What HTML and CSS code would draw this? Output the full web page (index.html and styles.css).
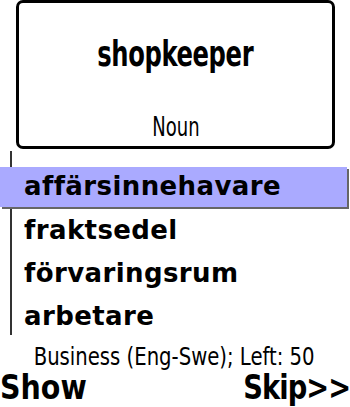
FILE: index.html
```html
<!DOCTYPE html>
<html>
<head>
<meta charset="utf-8">
<link rel="stylesheet" href="styles.css">
</head>
<body>
<div class="screen">
  <div class="card">
    <div class="word">shopkeeper</div>
    <div class="pos">Noun</div>
  </div>
  <div class="list">
    <div class="rail"></div>
    <div class="row sel"><span>affärsinnehavare</span></div>
    <div class="row"><span>fraktsedel</span></div>
    <div class="row"><span>förvaringsrum</span></div>
    <div class="row"><span>arbetare</span></div>
  </div>
  <div class="status">Business (Eng-Swe); Left: 50</div>
  <div class="softkeys">
    <span class="sk left">Show</span>
    <span class="sk right">Skip&gt;&gt;</span>
  </div>
</div>
</body>
</html>
```
FILE: styles.css
```css
html, body {
  margin: 0;
  padding: 0;
  background: #fff;
}
.screen {
  width: 350px;
  height: 407px;
  overflow: hidden;
  display: flex;
  flex-direction: column;
  color: #000;
  font-family: "DejaVu Sans Condensed", "DejaVu Sans", sans-serif;
}
.card {
  box-sizing: border-box;
  margin-left: 16px;
  width: 319px;
  height: 149px;
  border: 3px solid #000;
  border-radius: 7px;
  display: flex;
  flex-direction: column;
  align-items: center;
}
.word {
  margin-top: 29px;
  font-size: 35px;
  font-weight: bold;
  line-height: 44px;
  letter-spacing: -0.5px;
  transform: scaleX(0.77);
}
.pos {
  margin-top: 36px;
  font-size: 27px;
  line-height: 30px;
  transform: scaleX(0.74);
}
.list {
  position: relative;
  margin-top: 18px;
  display: flex;
  flex-direction: column;
}
.rail {
  position: absolute;
  left: 10px;
  top: -16px;
  width: 2px;
  height: 184px;
  background: #333;
}
.row {
  position: relative;
  height: 42px;
  display: flex;
  align-items: center;
  padding-left: 24px;
  font-family: "DejaVu Sans", sans-serif;
  font-weight: bold;
  font-size: 26px;
  letter-spacing: 0.4px;
}
.row + .row { height: 43px; }
.row.sel {
  height: 40px;
  margin-right: 3px;
  margin-bottom: 2px;
  background: #aaaaff;
  box-shadow: 2px 2px 0 #666;
}
.row span { position: relative; top: -1px; }
.status {
  margin-top: 6px;
  padding-left: 37px;
  font-size: 24px;
  line-height: 26px;
  white-space: nowrap;
  transform: scaleX(0.91);
  transform-origin: left center;
}
.softkeys {
  display: flex;
  justify-content: space-between;
  font-size: 33px;
  font-weight: bold;
  line-height: 34px;
  margin-top: 1px;
}
.sk { display: inline-block; }
.sk.left {
  transform: scaleX(0.96);
  transform-origin: left center;
}
.sk.right {
  letter-spacing: -1px;
  transform: scaleX(0.92);
  transform-origin: right center;
}
```
